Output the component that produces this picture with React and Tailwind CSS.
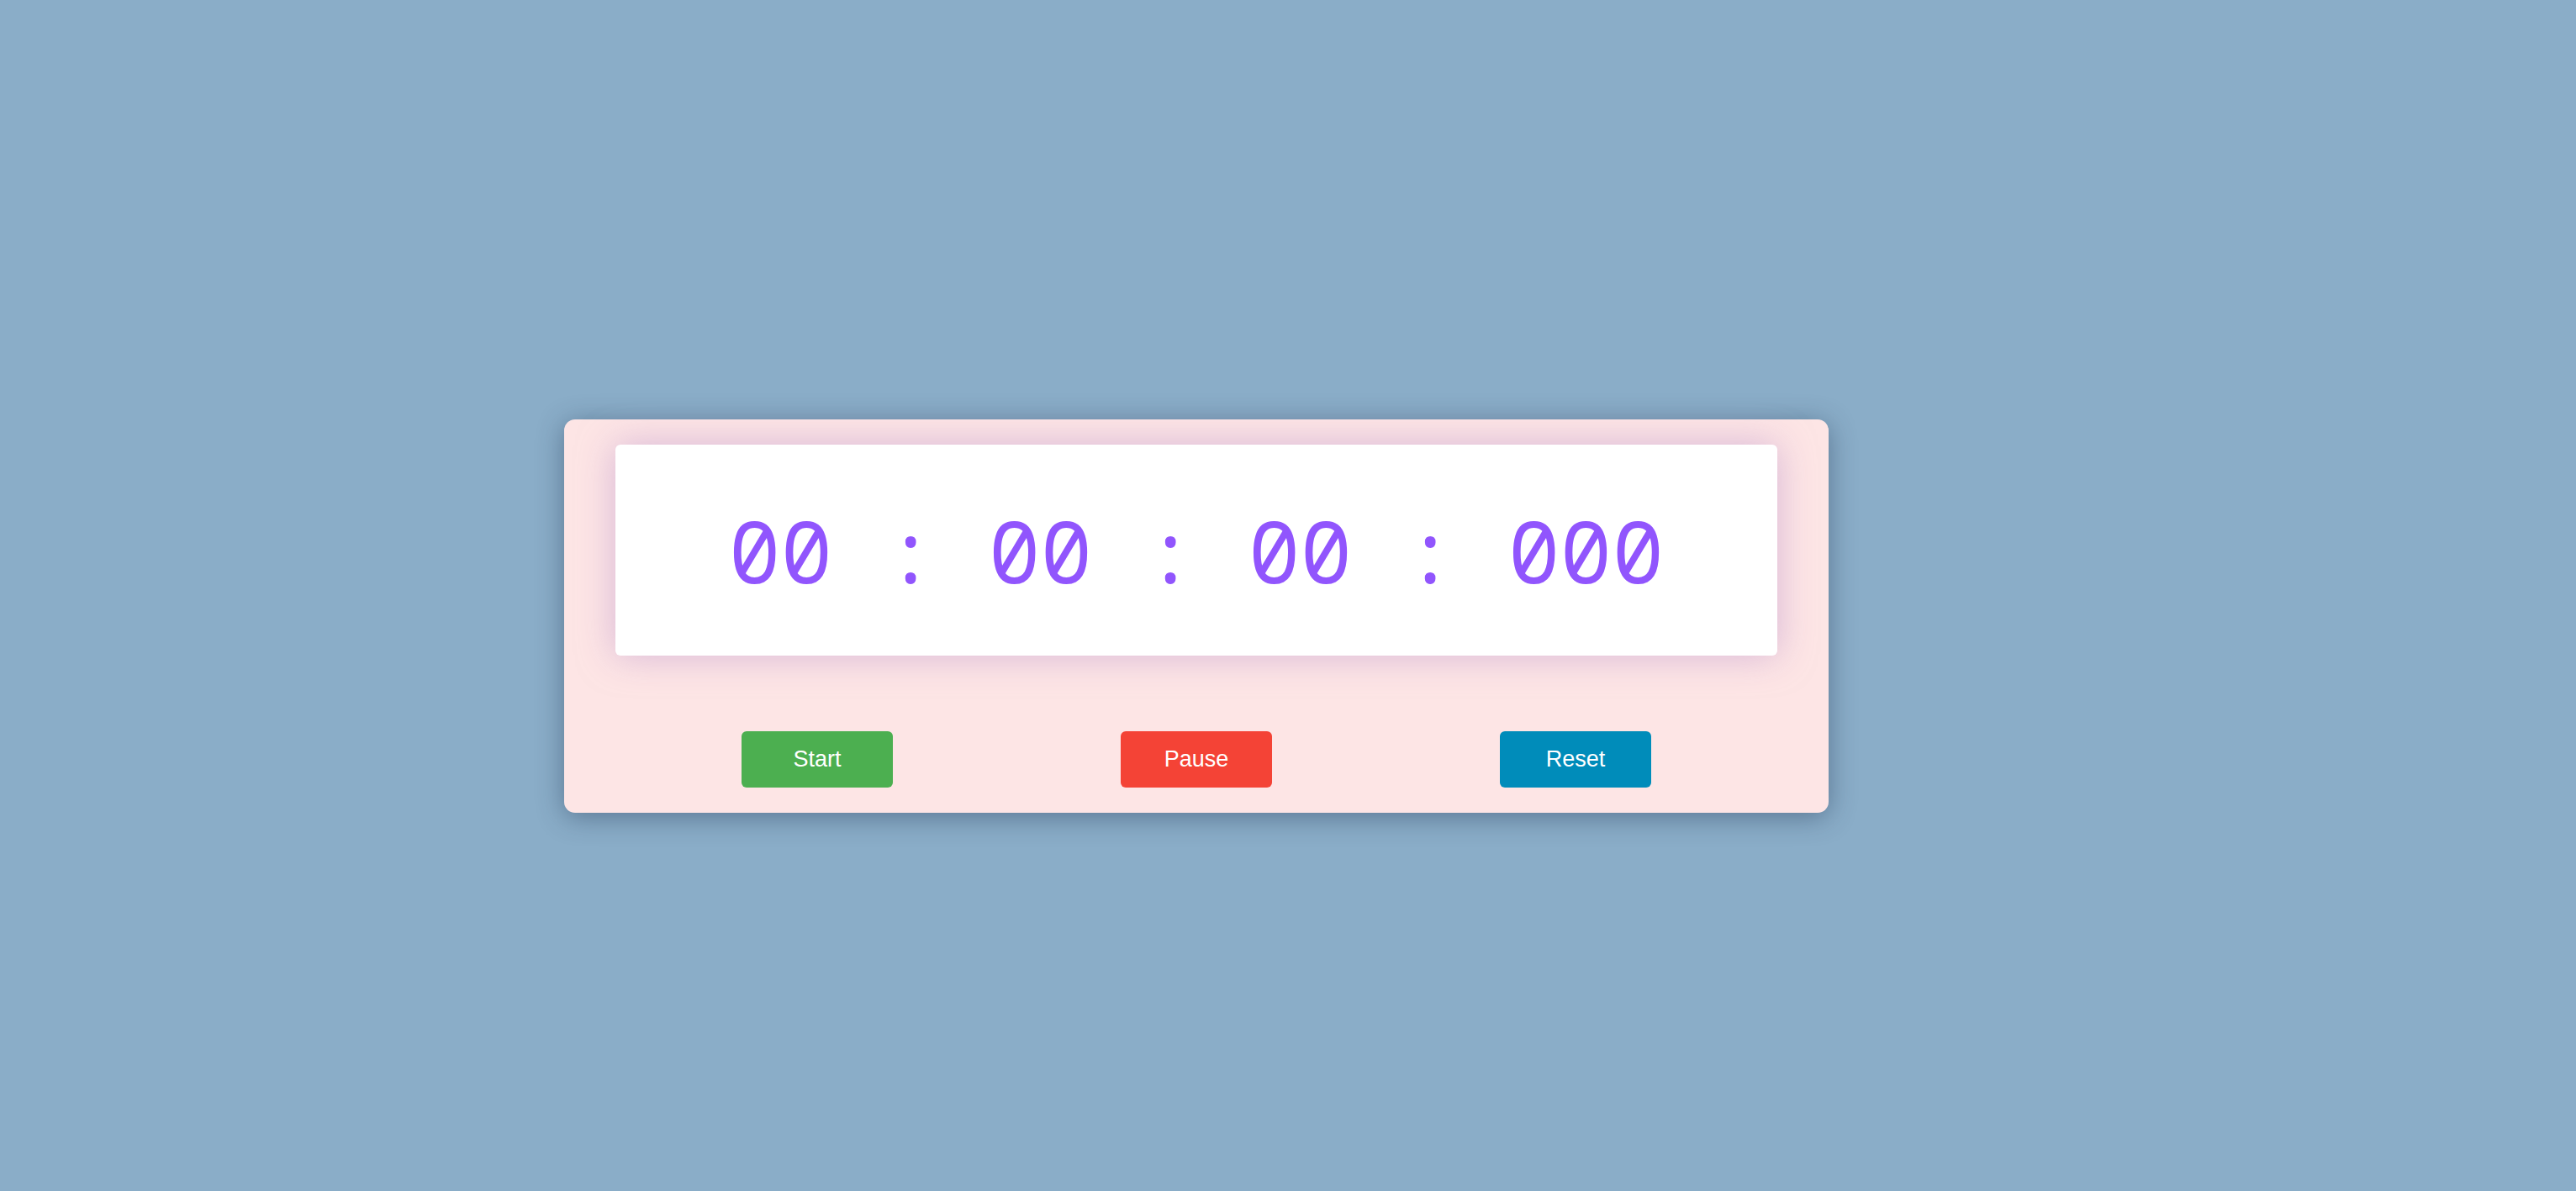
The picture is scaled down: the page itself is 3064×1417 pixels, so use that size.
const buttons = [
  { label: 'Start', cls: 'bg-[#4caf50]' },
  { label: 'Pause', cls: 'bg-[#f44336]' },
  { label: 'Reset', cls: 'bg-[#008cba]' },
];

export default function App() {
  return (
    <div className="min-h-screen bg-[#8aadc8] pl-[671px] pt-[499px]">
      <div className="w-[1504px] rounded-[13px] bg-[#fde5e5] px-[61px] py-[30px] shadow-[0_5px_32px_rgba(30,50,80,0.45)]">
        {/* display */}
        <div className="flex h-[251px] items-center justify-center rounded-[6px] bg-white shadow-[0_0_44px_rgba(190,150,205,0.6)]">
          <span className="text-[103px] leading-none text-[#9155fd] whitespace-pre font-['Noto_Sans_Mono',monospace]">
            00 : 00 : 00 : 000
          </span>
        </div>

        {/* controls */}
        <div className="mt-[90px] flex justify-center gap-[271px]">
          {buttons.map((b) => (
            <button
              key={b.label}
              className={`h-[67px] w-[180px] rounded-[6px] text-[27px] text-white font-['Liberation_Sans',Arial,sans-serif] ${b.cls}`}
            >
              {b.label}
            </button>
          ))}
        </div>
      </div>
    </div>
  );
}
